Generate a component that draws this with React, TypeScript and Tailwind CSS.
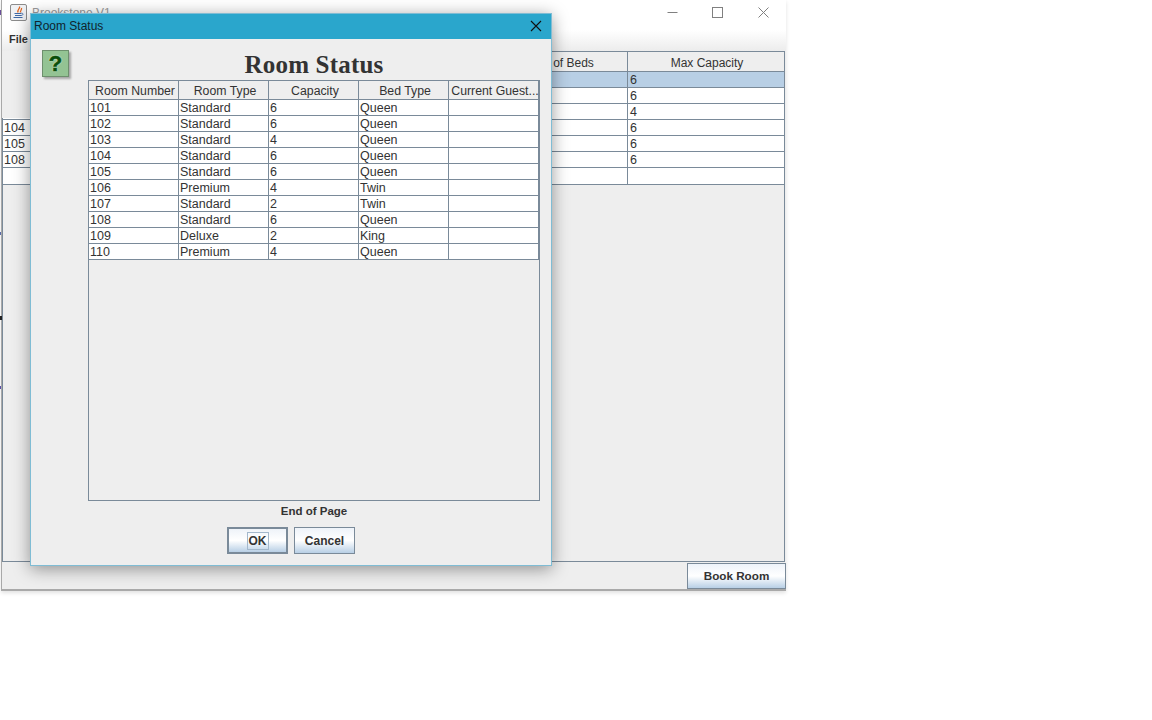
const dialogRows = [
  ["101", "Standard", "6", "Queen"],
  ["102", "Standard", "6", "Queen"],
  ["103", "Standard", "4", "Queen"],
  ["104", "Standard", "6", "Queen"],
  ["105", "Standard", "6", "Queen"],
  ["106", "Premium", "4", "Twin"],
  ["107", "Standard", "2", "Twin"],
  ["108", "Standard", "6", "Queen"],
  ["109", "Deluxe", "2", "King"],
  ["110", "Premium", "4", "Queen"],
];

const dialogHeaders = ["Room Number", "Room Type", "Capacity", "Bed Type", "Current Guest..."];

const mainRows = [
  { room: "", max: "6" },
  { room: "", max: "6" },
  { room: "", max: "4" },
  { room: "104", max: "6" },
  { room: "105", max: "6" },
  { room: "108", max: "6" },
  { room: "", max: "" },
];

const MainWindow = () => {
  return (
    <div className="relative ml-px flex h-[591px] w-[785px] flex-col border-b-2 border-l border-[#a9a9a9] bg-[#eeeeee] shadow-[0_2px_4px_rgba(0,0,0,0.12)]">
      <div className="flex h-[30px] shrink-0 items-start bg-white">
        <div className="mt-1 ml-2 flex h-[17px] w-[17px] items-center justify-center rounded-[2px] border border-[#8c8c8c] bg-[#f0f2f5]">
          <svg width="13" height="13" viewBox="0 0 13 13" fill="none">
            <path d="M7.5 0.5C8.5 2.5 5 3.5 6 6.5M9.5 2C10 4 8 4.5 8.5 6.5" stroke="#e0651f" strokeWidth="1.3" />
            <path d="M2.5 7.5h6.5M3 9.5h6M1.5 11.5h9" stroke="#3f6aa8" strokeWidth="1.1" />
            <path d="M9 7.3c2.5-.5 3 1.8 0 2.2" stroke="#3f6aa8" strokeWidth="0.9" />
          </svg>
        </div>
        <span className="mt-[5px] ml-[5px] text-[12px] leading-4 text-[#9a9a9a]">Brookstone V1</span>
        <div className="ml-auto flex items-start">
          <svg className="mt-[7px] mr-[34px]" width="11" height="11" viewBox="0 0 11 11" fill="none">
            <path d="M0.5 5.5h10" stroke="#808080" />
          </svg>
          <svg className="mt-[7px] mr-[35px]" width="11" height="11" viewBox="0 0 11 11" fill="none">
            <rect x="0.5" y="0.5" width="10" height="10" stroke="#808080" />
          </svg>
          <svg className="mt-[7px] mr-[17px]" width="11" height="11" viewBox="0 0 11 11" fill="none">
            <path d="M0.5 0.5l10 10M10.5 0.5l-10 10" stroke="#808080" />
          </svg>
        </div>
      </div>
      <div className="flex h-[21px] shrink-0 items-center bg-gradient-to-b from-white to-[#ececec] pb-0.5 pl-[7px] text-[11px] font-bold text-[#333333]">
        File
      </div>
      <div className="mr-px flex h-[511px] flex-col border-r border-b border-l border-[#7a8a99]">
        <MainTable />
      </div>
      <div className="flex flex-1 items-start justify-end">
        <button className="mt-px h-[26px] w-[99px] border border-[#7a8a99] bg-gradient-to-b from-[#eef3f9] via-white to-[#b8cfe5] text-[11.7px] font-bold text-[#333333]">
          Book Room
        </button>
      </div>
      {/* stale paint left of the dialog, the first rows never got redrawn */}
      <div className="absolute top-[51px] left-0 h-[67px] w-[30px] bg-[#eeeeee]" />
    </div>
  );
};

const MainTable = () => {
  return (
    <div className="border-b border-[#7a8a99] text-[12.5px] text-[#333333]">
      <div className="grid h-[21px] grid-cols-[156px_156px_157px_156px_1fr] border-t border-b border-[#7a8a99] bg-[#eeeeee] text-[12px]">
        {["", "", "", "Number of Beds", "Max Capacity"].map((h, i) => (
          <div key={i} className="flex items-center justify-center border-r border-[#7a8a99] pt-0.5 pl-0.5 leading-none last:border-r-0">
            {h}
          </div>
        ))}
      </div>
      {mainRows.map((row, i) => (
        <div
          key={i}
          className={`grid h-4 grid-cols-[156px_156px_157px_156px_1fr] border-b border-[#7a8a99] leading-[16px] last:border-b-0 ${i === 0 ? "bg-[#b8cfe5]" : "bg-white"}`}
        >
          <div className="pl-px">{row.room}</div>
          <div />
          <div />
          <div className="border-r border-[#7a8a99]" />
          <div className="pl-0.5">{row.max}</div>
        </div>
      ))}
    </div>
  );
};

const RoomStatusDialog = () => {
  return (
    <div className="absolute top-[13px] left-[30px] flex h-[553px] w-[522px] flex-col border border-[#7fbcd4] bg-[#eeeeee] shadow-[0_3px_16px_rgba(0,0,0,0.4)]">
      <div className="flex h-[25px] shrink-0 items-center justify-between bg-[#2aa6cc] pr-[9px] pb-px pl-[3px]">
        <span className="text-[12px] text-[#10242c]">Room Status</span>
        <svg width="12" height="12" viewBox="0 0 12 12" fill="none">
          <path d="M1 1l10 10M11 1L1 11" stroke="#111111" strokeWidth="1.1" />
        </svg>
      </div>
      <div className="flex items-start">
        <div className="mt-[11px] ml-[11px] flex h-[27px] w-[27px] shrink-0 items-center justify-center border border-[#6d8f6d] bg-[#93c393] shadow-[2px_2px_2px_rgba(0,0,0,0.3)]">
          <span className="text-[22px] leading-none font-bold text-[#0a4f0a] [-webkit-text-stroke:0.6px_#0a4f0a] [text-shadow:0_0_2px_#f0fff0,0_0_1px_#f0fff0]">?</span>
        </div>
        <div className="ml-[19px] w-[452px]">
          <div className="flex h-[41px] items-end justify-center font-['Liberation_Serif',serif] text-[25px] leading-[30px] font-bold tracking-[0.2px] text-[#333333]">
            Room Status
          </div>
          <div className="h-[421px] border border-[#7a8a99]">
            <div className="flex h-[19px] border-b border-[#7a8a99] text-[12.3px] text-[#333333]">
              {dialogHeaders.map((h) => (
                <div key={h} className="flex w-[90px] shrink-0 items-center justify-center border-r border-[#7a8a99] pt-0.5 pl-[3px] whitespace-nowrap">
                  {h}
                </div>
              ))}
            </div>
            {dialogRows.map((row) => (
              <div key={row[0]} className="flex h-4 w-[450px] border-b border-[#7a8a99] bg-white text-[12.5px] leading-[16px] text-[#333333]">
                {row.map((cell, i) => (
                  <div key={i} className="w-[90px] shrink-0 border-r border-[#7a8a99] pl-px">
                    {cell}
                  </div>
                ))}
                <div className="w-[90px] shrink-0 border-r border-[#7a8a99]" />
              </div>
            ))}
          </div>
          <div className="mt-[2px] text-center text-[11.5px] leading-4 font-bold text-[#333333]">End of Page</div>
        </div>
      </div>
      <div className="mt-[8px] flex justify-center gap-1.5">
        <button className="flex h-[27px] w-[61px] items-center justify-center border-2 border-[#7a8a99] bg-gradient-to-b from-[#eef3f9] via-white to-[#b8cfe5] text-[12px] font-bold text-[#333333]">
          <span className="border border-[#a3b8cc] px-px leading-[16px]">OK</span>
        </button>
        <button className="h-[27px] w-[61px] border border-[#7a8a99] bg-gradient-to-b from-[#eef3f9] via-white to-[#b8cfe5] text-[12px] font-bold text-[#333333]">
          Cancel
        </button>
      </div>
    </div>
  );
};

export default function App() {
  return (
    <div className="relative h-[720px] w-[1152px] overflow-hidden bg-white font-['Liberation_Sans',Arial,sans-serif]">
      <MainWindow />
      <RoomStatusDialog />
      {/* bits of the desktop showing along the left edge */}
      <div className="absolute top-[10px] left-0 h-[5px] w-px bg-[#6b4f9a]" />
      <div className="absolute top-[232px] left-0 h-[3px] w-px bg-[#5a6aa8]" />
      <div className="absolute top-[316px] left-0 h-[4px] w-0.5 bg-[#222222]" />
      <div className="absolute top-[386px] left-0 h-[3px] w-px bg-[#5a4fa8]" />
    </div>
  );
}
